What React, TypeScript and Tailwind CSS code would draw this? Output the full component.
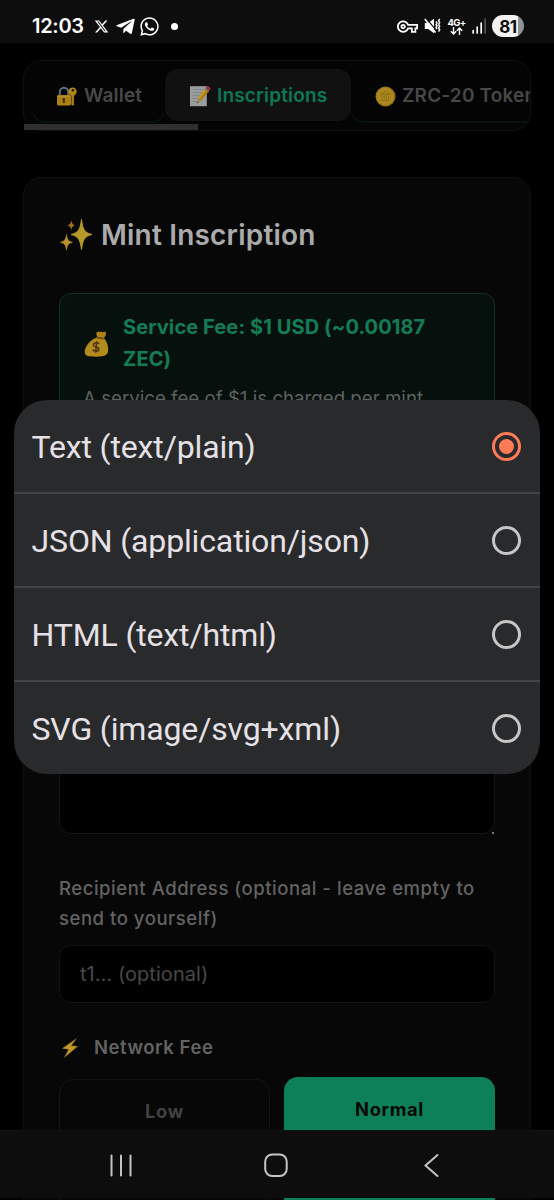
import { FaTelegramPlane, FaWhatsapp } from "react-icons/fa";
import { FaXTwitter } from "react-icons/fa6";
import { MdOutlineVpnKey } from "react-icons/md";

const contentTypes = ["Text (text/plain)", "JSON (application/json)", "HTML (text/html)", "SVG (image/svg+xml)"];

function LockIcon() {
  return (
    <svg width="21" height="21" viewBox="0 0 21 21" className="shrink-0">
      <path d="M3.8 10V6a4.2 4.2 0 0 1 8.4 0v4" fill="none" stroke="#587584" strokeWidth="2" />
      <rect x="1" y="9" width="14" height="10.5" rx="1.4" fill="#ab8018" />
      <path d="M1.6 10.6h12.6" stroke="#bd942a" strokeWidth="1" />
      <path d="M7.8 12a1.4 1.4 0 0 1 .8 2.5l.4 2.3H6.700l.4-2.3a1.400 1.400 0 0 1 .7-2.500z" fill="#3a2710" />
      <path d="M15.400 8v10.800l1.700 1 1.300-1.300-.9-1 1-1.100-1-1 .6-1V8" fill="#a87c19" />
      <circle cx="16.500" cy="5.600" r="4.200" fill="#b38518" />
      <circle cx="16.900" cy="4.300" r="1.200" fill="#15120a" />
    </svg>
  );
}

function MemoIcon() {
  return (
    <svg width="22" height="22" viewBox="0 0 22 22" className="shrink-0">
      <rect x="1" y="1.2" width="16.8" height="20" fill="#999da0" />
      <path d="M3.5 4.5h10M3.5 7.5h9M3.5 10.5h7M3.5 13.5h5M3.5 16.5h4" stroke="#7c8184" strokeWidth="0.8" />
      <path d="M17 2.6l3.4 3.1L11.8 16l-3.6 2 .7-4.4z" fill="#b17c15" />
      <path d="M17 2.6l1.7 1.5-8.5 10-1.3-.5z" fill="#c4971f" />
      <path d="M8.9 13.8l-.9 4.4 3.8-2.2z" fill="#a18a6c" />
      <path d="M8.4 16.4L8 18.2l1.6-.9z" fill="#222" />
      <path d="M16.2 3.6l1.8-2.1c.5-.6 1.2-.5 1.8 0l1.3 1.2c.6.6.6 1.2.1 1.8l-1.6 1.9z" fill="#97323a" />
      <path d="M15.9 3.9l.9-1 3.4 3-.9 1z" fill="#69757b" />
    </svg>
  );
}

function CoinIcon() {
  return (
    <svg width="21" height="21" viewBox="0 0 21 21" className="shrink-0">
      <circle cx="10.5" cy="10.5" r="10" fill="#9a7414" />
      <circle cx="10.2" cy="10.3" r="8.8" fill="#ab891e" />
      <path d="M5.2 8.4L10.3 5.3l5.1 3.1zM5.5 14.6h9.6M7 9.5v4M9.2 9.5v4M11.4 9.5v4M13.6 9.5v4" fill="none" stroke="#8e6d1b" strokeWidth="0.9" />
    </svg>
  );
}

function SparklesIcon() {
  return (
    <svg width="34" height="34" viewBox="0 0 34 34" className="shrink-0">
      <path d="M22.500 1.500c1.300 9.400 2.400 13.200 10.500 15-8.100 1.800-9.200 6-10.500 15-1.300-9-2.600-13.200-10.500-15 7.900-1.800 9.200-5.600 10.500-15z" fill="#b69a29" stroke="#b69a29" strokeLinejoin="round" />
      <path d="M7.500 16.500c.8 4.800 1.600 6.800 6 7.800-4.400 1-5.200 3.100-6 7.800-.8-4.700-1.600-6.800-6-7.800 4.400-1 5.200-3 6-7.800z" fill="#b69228" stroke="#b69228" strokeWidth="0.6" strokeLinejoin="round" />
      <path d="M12.300 2c.5 3.300 1.100 4.600 4.200 5.300-3.100.7-3.700 2.100-4.200 5.200-.5-3.100-1.100-4.500-4.200-5.200 3.100-.7 3.700-2 4.200-5.300z" fill="#a2701e" />
    </svg>
  );
}

function MoneyBagIcon() {
  return (
    <svg width="25" height="27" viewBox="0 0 24 26" className="shrink-0">
      <path d="M12.500 6.500L11.600 2.300c1.200.3 1.700-.1 2.500-1 .8.700 1.700 1.100 2.700.1.800 1 1.900 1.100 3.500 0 1.100 1.400.8 2.400.8 3.400L19 8z" fill="#ad8318" />
      <path d="M12.400 7h6.300c2.800 3.500 5 8.300 4.500 13-.4 4.200-2.900 5.700-11.500 5.700S1 25.200.7 21.500C.2 16 6.400 9.400 12.400 7z" fill="#b38a1c" />
      <path d="M12 7.400l7 .9" stroke="#6e4c12" strokeWidth="1.800" />
      <path d="M14.600 13.200c-2-1.500-5.500-1.100-5.600 1.100-.1 2.400 5.300 1.700 5.200 4.200-.1 2.300-4 2.400-6 .7M12.300 10.800l-1.200 11" fill="none" stroke="#4e3214" strokeWidth="1.500" />
    </svg>
  );
}

function BoltIcon() {
  return (
    <svg width="18" height="22" viewBox="0 0 18 22" className="shrink-0">
      <path d="M16 1L1 11.600l6.300 1L3 21l14-11.700-6.500-.8z" fill="#b18318" />
      <path d="M14.500 2.500L3.500 11l5.300.8-2.800 6L14.500 10l-6-.4z" fill="#c09a28" />
    </svg>
  );
}

function MuteVibrateIcon() {
  return (
    <svg width="17" height="16" viewBox="0 0 17 16">
      <path d="M.8 5h3.400L10 .8v14.400L4.200 11H.8z" fill="#fff" />
      <path d="M1.900-.2l11 13.500" stroke="#0d0d0d" strokeWidth="1.200" />
      <path d="M.8 1l10.700 13.400" stroke="#fff" strokeWidth="1.600" />
      <path d="M12 3.500l1 1.500-1 1.500 1 1.500-1 1.500 1 1.500M15.700 1l-1.200 1.800 1.200 1.800-1.200 1.800 1.200 1.800-1.200 1.800 1.200 1.800-1.200 1.800" fill="none" stroke="#fff" strokeWidth="1.400" />
    </svg>
  );
}

function StatusBar() {
  return (
    <header className="flex h-[43px] shrink-0 items-start justify-between bg-[#0d0d0d] pl-8 pr-[30px] pt-[14px] text-white">
      <div className="flex h-6 items-center">
        <span className="w-[62px] text-[20px] font-semibold leading-6 tracking-[-0.3px]">12:03</span>
        <FaXTwitter className="h-[15px] w-[15px]" />
        <FaTelegramPlane className="ml-[6px] h-[21px] w-[21px]" />
        <FaWhatsapp className="ml-[3px] h-[21px] w-[21px]" />
        <span className="ml-[11px] h-[7px] w-[7px] rounded-full bg-white" />
      </div>
      <div className="flex h-6 items-center">
        <MdOutlineVpnKey className="h-[21px] w-[21px]" />
        <span className="ml-[6px]">
          <MuteVibrateIcon />
        </span>
        <span className="ml-[6px] flex w-[19px] flex-col items-center">
          <span className="text-[9.5px] font-bold leading-[9px] tracking-[-0.6px]">4G+</span>
          <svg width="13" height="8" viewBox="0 0 13 8" fill="none" stroke="#fff" strokeWidth="1.4">
            <path d="M3.5 0v7M.8 4.2l2.700 2.800 2.700-2.800M9.500 8V1M6.800 3.800L9.500 1l2.700 2.800" />
          </svg>
        </span>
        <svg width="15" height="16" viewBox="0 0 15 16" className="ml-[6px]">
          <path d="M1.200 12.500V15M5.200 9v6M9.200 5v10" stroke="#fff" strokeWidth="1.700" strokeLinecap="round" />
          <path d="M13.200 1v14" stroke="#555" strokeWidth="1.700" strokeLinecap="round" />
        </svg>
        <span className="ml-[5px] flex h-[22px] w-8 items-center justify-center rounded-full bg-linear-to-r from-[#f2f2f2] from-81% to-[#929292] to-81% pt-px text-[17px] font-bold leading-[20px] tracking-[-0.4px] text-[#0d0d0d]">
          81
        </span>
      </div>
    </header>
  );
}

function Tabs() {
  return (
    <div className="relative">
      <nav className="flex h-[71px] overflow-hidden rounded-[18px] border border-[#101010] bg-[#040404] p-[8px] text-[19px] font-semibold tracking-[0.18px] text-[#484848]">
        <div className="flex h-[52px] w-[133px] shrink-0 items-center gap-[7px] rounded-[13px] pl-[24px] pt-[2px] shadow-[0_2px_0_#07120e]">
          <LockIcon />
          Wallet
        </div>
        <div className="flex h-[52px] w-[186px] shrink-0 items-center gap-[6px] rounded-[13px] bg-[#111111] pl-[24px] pt-[2px] text-[#0d7954]">
          <MemoIcon />
          Inscriptions
        </div>
        <div className="flex h-[52px] w-[210px] shrink-0 items-center gap-[6px] whitespace-nowrap rounded-[13px] pl-[24px] pt-[2px] shadow-[0_2px_0_#07120e]">
          <CoinIcon />
          ZRC-20 Tokens
        </div>
      </nav>
      {/* Horizontal scroll thumb */}
      <span className="absolute bottom-[1px] left-[1px] h-[6px] w-[174px] bg-[#2f2f2f]" />
    </div>
  );
}

function MintCard() {
  return (
    <section className="mt-[46px] h-[1040px] rounded-[18px] border border-[#101010] bg-[#070707] px-[35px] pt-[37px]">
      <h1 className="flex h-10 items-center gap-[8px] text-[28px] font-semibold tracking-[0.2px] text-[#ababab]">
        <SparklesIcon />
        Mint Inscription
      </h1>

      {/* Service fee */}
      <div className="mt-[38px] h-[160px] rounded-[12px] border border-[#0b3426] bg-[#06110d] px-[24px] pt-[17px]">
        <div className="flex items-center gap-[14px] whitespace-nowrap">
          <MoneyBagIcon />
          <p className="text-[20px] font-bold leading-8 tracking-[0.1px] text-[#147d57]">
            Service Fee: $1 USD (~0.00187
            <br />
            ZEC)
          </p>
        </div>
        <p className="-ml-px mt-[8px] whitespace-nowrap text-[18.7px] leading-[31px] text-[#5d6260]">A service fee of $1 is charged per mint</p>
      </div>

      <div className="relative mt-[87px] h-[294px] rounded-[12px] border border-[#141414] bg-black">
        <span className="absolute -bottom-px right-0 h-[2px] w-[2px] bg-[#777]" />
      </div>

      <p className="mt-[39px] whitespace-nowrap text-[18.5px] font-medium leading-[30px] tracking-[0.54px] text-[#636363]">
        Recipient Address (optional - leave empty to
        <br />
        send to yourself)
      </p>
      <div className="mt-[12px] flex h-[58px] items-center rounded-[12px] border border-[#121212] bg-black pl-[20px] text-[20px] tracking-[0.05px] text-[#484848]">
        t1... (optional)
      </div>

      {/* Network fee */}
      <h2 className="mt-[28px] flex h-8 items-center gap-[15px] pl-[2px] pt-px text-[18.5px] font-semibold tracking-[0.55px] text-[#636363]">
        <BoltIcon />
        Network Fee
      </h2>
      <div className="mt-[16px] grid grid-cols-2 gap-[14px] text-[18.3px] font-bold tracking-[0.65px]">
        <div className="flex h-[146px] items-start justify-center rounded-[14px] border border-[#151515] pt-[18px] text-[#424242]">
          Low
        </div>
        <div className="-mt-[2px] flex h-[148px] items-start justify-center rounded-[14px] bg-[#0d8059] pt-[19px] text-[#030705]">
          Normal
        </div>
      </div>
    </section>
  );
}

function ContentTypeDialog() {
  return (
    <div className="absolute inset-x-[14px] top-[400px] flex h-[374px] flex-col overflow-hidden rounded-[33px] bg-[#292a2c]">
      {contentTypes.map((type, i) => (
        <div
          key={type}
          className="flex h-[94px] shrink-0 items-center justify-between border-b-2 border-[#424345] pl-[17.5px] pr-[19px] font-[Roboto,sans-serif] text-[32px] tracking-[-0.14px] text-[#e6e1e6]"
        >
          <span className="pt-[2px]">{type}</span>
          {i === 0 ? (
            <span className="flex h-[29px] w-[29px] items-center justify-center rounded-full border-3 border-[#ff7b57]">
              <span className="h-[15px] w-[15px] rounded-full bg-[#ff7b57]" />
            </span>
          ) : (
            <span className="h-[29px] w-[29px] rounded-full border-3 border-[#c6c6c7]" />
          )}
        </div>
      ))}
    </div>
  );
}

function NavigationBar() {
  return (
    <footer className="absolute inset-x-0 top-[1130px] flex h-[68px] border-t border-[#121414] bg-[#0d0d0d]">
      <svg width="554" height="67" viewBox="0 0 554 67" fill="none" stroke="#c4c4c4" strokeWidth="2" strokeLinecap="round">
        <path d="M111.500 24.500v20M121 24.500v20M130.500 24.500v20" />
        <rect x="265.200" y="23.500" width="21.500" height="21.500" rx="7" />
        <path d="M437.500 24L425.500 34.500l12 10.500" />
      </svg>
    </footer>
  );
}

export default function App() {
  return (
    <div className="relative flex h-[1200px] w-[554px] flex-col overflow-hidden bg-black font-[Inter,sans-serif]">
      <StatusBar />
      <main className="px-[23px] pt-[17px]">
        <Tabs />
        <MintCard />
      </main>
      <ContentTypeDialog />
      <NavigationBar />
    </div>
  );
}
